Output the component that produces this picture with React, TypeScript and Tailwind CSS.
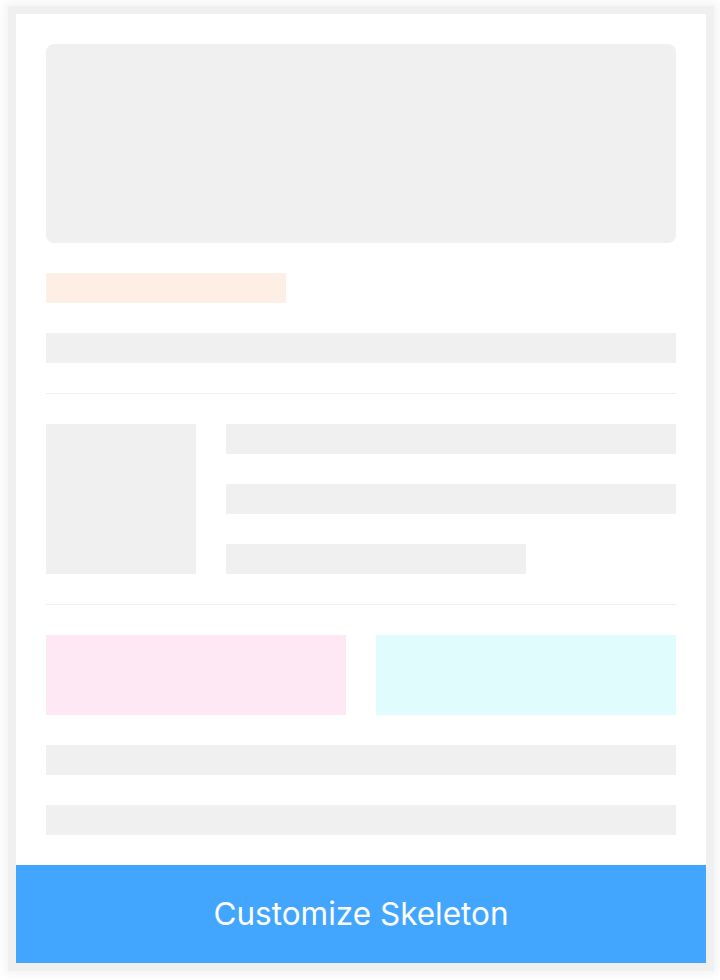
export default function App() {
  return (
    <div className="min-h-[980px] w-[720px] bg-white pt-[14px] pl-[16px]">
      {/* card with soft grey frame */}
      <div className="flex h-[949px] w-[690px] flex-col bg-white shadow-[0_0_0_8px_#f0f0f0,0_0_8px_12px_#f5f5f5]">
        <div className="flex flex-1 flex-col p-[30px]">
          {/* hero */}
          <div className="h-[199px] rounded-lg bg-[#f0f0f0]" />
          <div className="mt-[30px] h-[30px] w-[240px] bg-[#fdeee6]" />
          <div className="mt-[30px] h-[30px] bg-[#f0f0f0]" />

          <div className="my-[30px] h-px bg-[#efefef]" />

          {/* media row */}
          <div className="flex gap-[30px]">
            <div className="h-[150px] w-[150px] bg-[#f0f0f0]" />
            <div className="flex flex-1 flex-col gap-[30px]">
              <div className="h-[30px] bg-[#f0f0f0]" />
              <div className="h-[30px] bg-[#f0f0f0]" />
              <div className="h-[30px] w-[300px] bg-[#f0f0f0]" />
            </div>
          </div>

          <div className="my-[30px] h-px bg-[#efefef]" />

          {/* colored blocks */}
          <div className="grid grid-cols-2 gap-[30px]">
            <div className="h-[80px] bg-[#fde8f4]" />
            <div className="h-[80px] bg-[#e0fcfd]" />
          </div>
          <div className="mt-[30px] h-[30px] bg-[#f0f0f0]" />
          <div className="mt-[30px] h-[30px] bg-[#f0f0f0]" />
        </div>

        <button className="flex h-[99px] items-center justify-center bg-[#42a6ff] font-['Inter',sans-serif] text-[31.5px] text-white">
          Customize Skeleton
        </button>
      </div>
    </div>
  );
}
